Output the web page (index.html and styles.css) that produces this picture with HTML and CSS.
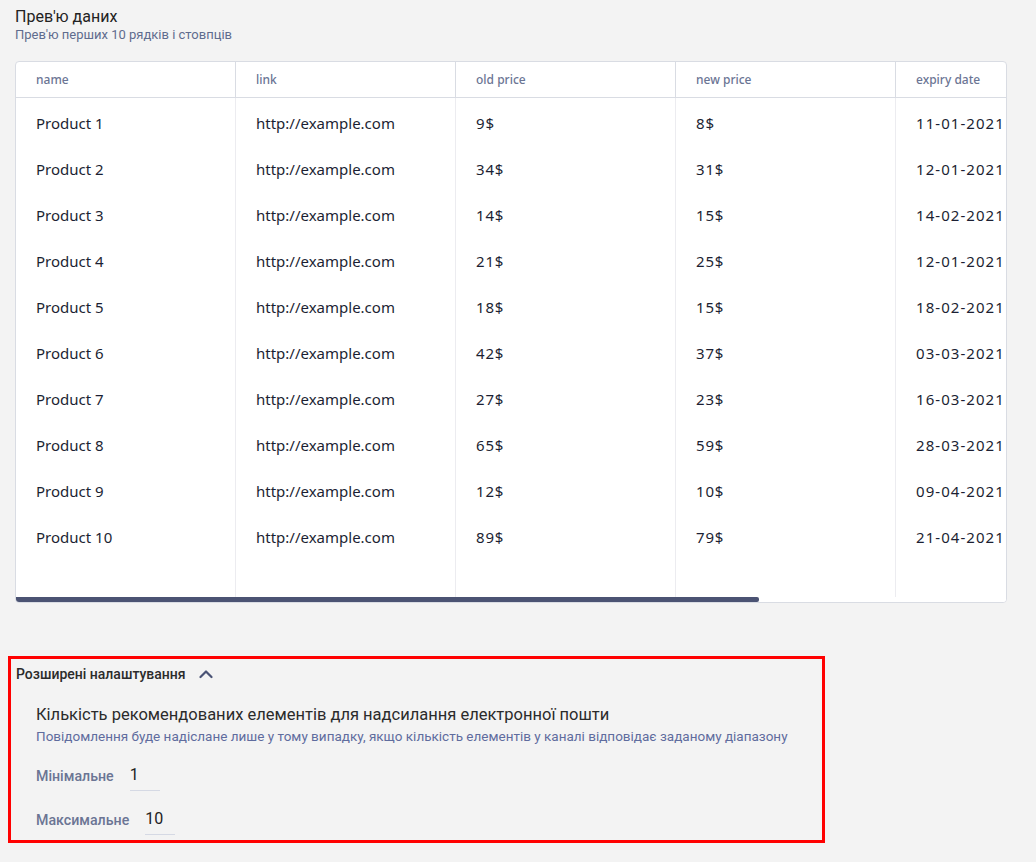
FILE: index.html
```html
<!DOCTYPE html>
<html lang="uk">
<head>
<meta charset="utf-8">
<link rel="stylesheet" href="styles.css">
</head>
<body>
<div class="page">
  <section class="preview">
    <h2 class="title">Прев'ю даних</h2>
    <p class="subtitle">Прев'ю перших 10 рядків і стовпців</p>
    <div class="card">
      <div class="scroller">
        <div class="grid">
          <div class="col">
            <div class="th">name</div>
            <div class="tbody">
              <div class="td">Product 1</div><div class="td">Product 2</div><div class="td">Product 3</div><div class="td">Product 4</div><div class="td">Product 5</div><div class="td">Product 6</div><div class="td">Product 7</div><div class="td">Product 8</div><div class="td">Product 9</div><div class="td">Product 10</div>
            </div>
          </div>
          <div class="col">
            <div class="th">link</div>
            <div class="tbody">
              <div class="td">http://example.com</div><div class="td">http://example.com</div><div class="td">http://example.com</div><div class="td">http://example.com</div><div class="td">http://example.com</div><div class="td">http://example.com</div><div class="td">http://example.com</div><div class="td">http://example.com</div><div class="td">http://example.com</div><div class="td">http://example.com</div>
            </div>
          </div>
          <div class="col">
            <div class="th">old price</div>
            <div class="tbody num">
              <div class="td">9$</div><div class="td">34$</div><div class="td">14$</div><div class="td">21$</div><div class="td">18$</div><div class="td">42$</div><div class="td">27$</div><div class="td">65$</div><div class="td">12$</div><div class="td">89$</div>
            </div>
          </div>
          <div class="col">
            <div class="th">new price</div>
            <div class="tbody num">
              <div class="td">8$</div><div class="td">31$</div><div class="td">15$</div><div class="td">25$</div><div class="td">15$</div><div class="td">37$</div><div class="td">23$</div><div class="td">59$</div><div class="td">10$</div><div class="td">79$</div>
            </div>
          </div>
          <div class="col">
            <div class="th">expiry date</div>
            <div class="tbody date">
              <div class="td">11-01-2021</div><div class="td">12-01-2021</div><div class="td">14-02-2021</div><div class="td">12-01-2021</div><div class="td">18-02-2021</div><div class="td">03-03-2021</div><div class="td">16-03-2021</div><div class="td">28-03-2021</div><div class="td">09-04-2021</div><div class="td">21-04-2021</div>
            </div>
          </div>
          <div class="col">
            <div class="th"></div>
            <div class="tbody"></div>
          </div>
        </div>
      </div>
      <div class="scrollbar"><div class="thumb"></div></div>
    </div>
  </section>

  <section class="advanced">
    <div class="adv-head">
      <span class="adv-title">Розширені налаштування</span>
      <svg class="chev" width="14" height="10" viewBox="0 0 14 10"><path d="M1.5 8 L7 2.5 L12.5 8" fill="none" stroke="#4a5375" stroke-width="2.2" stroke-linecap="round" stroke-linejoin="round"/></svg>
    </div>
    <div class="adv-body">
      <div class="adv-label">Кількість рекомендованих елементів для надсилання електронної пошти</div>
      <div class="adv-hint">Повідомлення буде надіслане лише у тому випадку, якщо кількість елементів у каналі відповідає заданому діапазону</div>
      <div class="field first">
        <span class="field-label">Мінімальне</span>
        <span class="field-input">1</span>
      </div>
      <div class="field">
        <span class="field-label">Максимальне</span>
        <span class="field-input">10</span>
      </div>
    </div>
  </section>
</div>
</body>
</html>
```
FILE: styles.css
```css
html, body {
  margin: 0;
  padding: 0;
  background: #f3f3f3;
}
body {
  font-family: Roboto, "Noto Sans", sans-serif;
  color: #222;
}
.page {
  padding: 8px 30px 0 8px;
}
.preview {
  padding-left: 7px;
}
.title {
  margin: 0;
  font-size: 16px;
  font-weight: 400;
  line-height: 18px;
  color: #222;
}
.subtitle {
  margin: 1px 0 0;
  font-size: 13px;
  line-height: 16px;
  color: #5f6c8e;
}
.card {
  margin-top: 18px;
  width: 990px;
  background: #fff;
  border: 1px solid #d9dce3;
  border-radius: 4px;
  overflow: hidden;
}
.scroller {
  overflow: hidden;
}
.grid {
  display: flex;
  width: 1320px;
}
.col {
  width: 220px;
  flex: none;
  display: flex;
  flex-direction: column;
  border-right: 1px solid #ececf0;
  box-sizing: border-box;
}
.th {
  height: 36px;
  box-sizing: border-box;
  padding-left: 20px;
  display: flex;
  align-items: center;
  font-family: "Noto Sans", Roboto, sans-serif;
  font-size: 12px;
  font-weight: 500;
  color: #6b7594;
  border-bottom: 1px solid #d9dce3;
  border-right: 1px solid #d9dce3;
  margin-right: -1px;
}
.tbody {
  padding: 2px 0 37px;
  min-height: 460px;
}
.td {
  height: 46px;
  display: flex;
  align-items: center;
  padding-left: 20px;
  font-family: "Noto Sans", Roboto, sans-serif;
  font-size: 15px;
  color: #1c1f33;
  white-space: nowrap;
}
.num .td {
  letter-spacing: 0.8px;
}
.date .td {
  letter-spacing: 1.05px;
}
.scrollbar {
  height: 5px;
  background: #fff;
}
.thumb {
  width: 743px;
  height: 5px;
  background: #4b5373;
  border-radius: 0 2px 2px 0;
}
.advanced {
  margin-top: 53px;
  width: 806px;
  border: 3px solid #ff0000;
  padding: 0 0 5px 5px;
}
.adv-head {
  display: flex;
  align-items: center;
  gap: 13px;
  height: 30px;
}
.adv-title {
  font-size: 14px;
  font-weight: 500;
  color: #2b2b2b;
}
.chev {
  display: block;
}
.adv-body {
  padding: 16px 0 0 20px;
}
.adv-label {
  font-size: 16.5px;
  line-height: 20px;
  color: #2b2b2b;
}
.adv-hint {
  margin-top: 3px;
  font-size: 13.5px;
  line-height: 16px;
  color: #5f6c9e;
}
.field {
  display: flex;
  align-items: center;
  gap: 16px;
  margin-top: 14px;
  height: 30px;
}
.field.first {
  margin-top: 17px;
}
.field-label {
  font-size: 14.2px;
  font-weight: 500;
  color: #6b7594;
}
.field-input {
  width: 30px;
  height: 30px;
  box-sizing: border-box;
  border-bottom: 1px solid #d5d9e4;
  font-size: 16px;
  line-height: 28px;
  color: #222;
}
```
